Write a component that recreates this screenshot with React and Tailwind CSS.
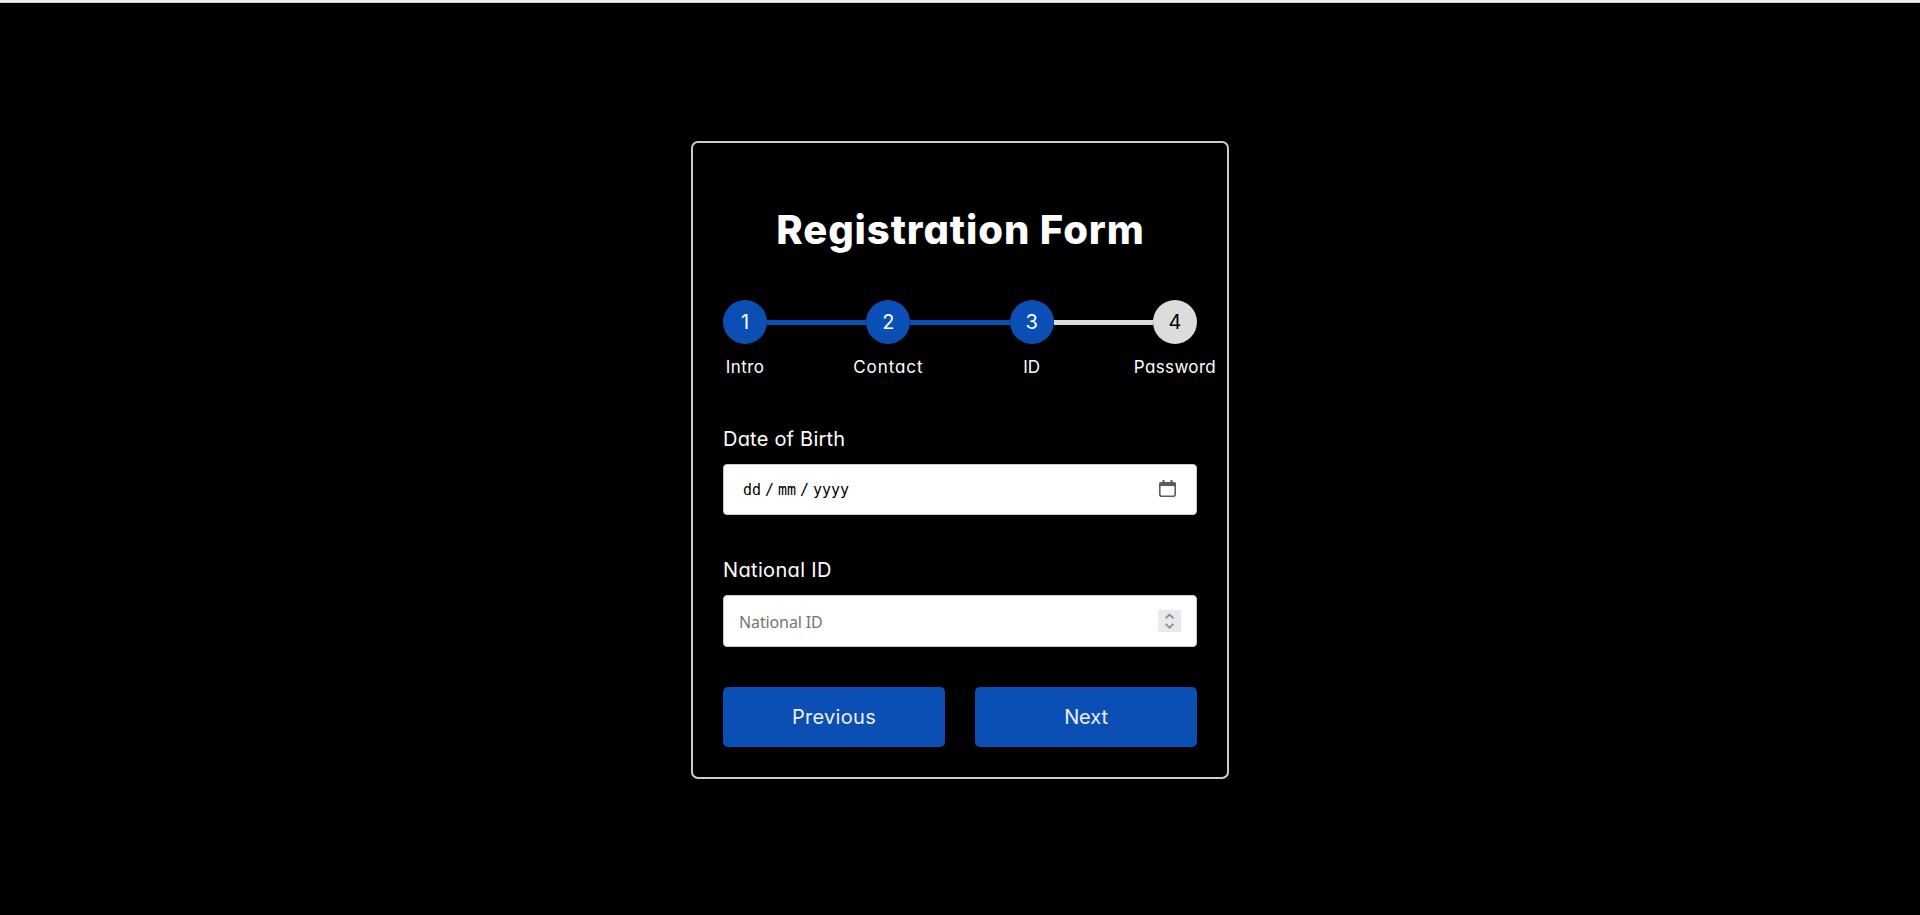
const steps = [
  { n: 1, label: 'Intro', active: true, tracking: 'tracking-[0.45px]' },
  { n: 2, label: 'Contact', active: true, tracking: 'tracking-[0.9px]' },
  { n: 3, label: 'ID', active: true, tracking: 'tracking-[0px]' },
  { n: 4, label: 'Password', active: false, tracking: 'tracking-[0.35px]' },
];

function Stepper() {
  return (
    <ol className="flex h-11 items-center">
      {steps.map((s, i) => (
        <li key={s.n} className={i ? 'flex flex-1 items-center' : 'flex items-center'}>
          {i > 0 && <span className={`mt-px h-[5px] flex-1 ${s.active ? 'bg-[#0b4fb4]' : 'bg-[#dcdcdc]'}`} />}
          <span
            className={`relative flex size-11 items-center justify-center rounded-full text-[20px] leading-none ${
              s.active ? 'bg-[#0b4fb4] text-white' : 'bg-[#dcdcdc] text-black'
            }`}
          >
            {s.n}
            <span className={`absolute top-[58px] left-1/2 -translate-x-1/2 text-[17px] leading-[18px] whitespace-nowrap text-white ${s.tracking}`}>
              {s.label}
            </span>
          </span>
        </li>
      ))}
    </ol>
  );
}

export default function App() {
  return (
    <div className="flex h-[915px] flex-col bg-black font-['Inter',sans-serif] text-white [font-feature-settings:'cv11']">
      <div className="h-[3px] shrink-0 border-b border-[#cccccc] bg-[#f0f0f0]" />
      <main className="flex flex-1 justify-center pt-[138px]">
        <form className="flex h-[638px] w-[538px] flex-col rounded-[7px] border-2 border-[#cccccc] px-[30px]">
          <h1 className="mt-[63px] h-12 pl-px text-center text-[40px] leading-[48px] font-extrabold tracking-[0.9px] whitespace-nowrap">
            Registration Form
          </h1>
          <div className="mt-[46px]">
            <Stepper />
          </div>

          <label className="mt-[83px] h-6 text-[20px] leading-6 tracking-[0.22px]">Date of Birth</label>
          <div className="mt-[13px] flex h-[51px] items-center justify-between rounded-[4px] border border-[#cccccc] bg-white pr-[20px] pl-[19px] text-black">
            <span className="mt-[2px] flex font-['DejaVu_Sans_Mono',monospace] text-[15px] leading-none">
              <span className="w-[22px]">dd</span>
              <span className="w-[13px]">/</span>
              <span className="w-[22px]">mm</span>
              <span className="w-[13px]">/</span>
              <span>yyyy</span>
            </span>
            <svg className="mb-[2px] h-[17px] w-[17px]" viewBox="0 0 17 17" fill="none">
              <path d="M4.5 0v3M12.5 0v3" stroke="#5b5b5b" strokeWidth="2" />
              <rect x="0.8" y="2.8" width="15.4" height="13.4" rx="2" stroke="#5b5b5b" strokeWidth="1.6" />
              <path d="M0 6V4a2 2 0 0 1 2-2h13a2 2 0 0 1 2 2v2z" fill="#5b5b5b" />
            </svg>
          </div>

          <label className="mt-[43px] h-6 text-[20px] leading-6 tracking-[0.35px]">National ID</label>
          <div className="mt-[13px] flex h-[52px] items-center justify-between rounded-[4px] border border-[#cccccc] bg-white pr-[15px] pl-[15px] text-[#757575]">
            <span className="mt-[2px] font-['Noto_Sans',sans-serif] text-[16px] leading-none tracking-[-0.12px]">National ID</span>
            <svg className="h-[22px] w-[23px] bg-[#e9e9ed]" viewBox="0 0 23 22" fill="none" stroke="#8f8f9d" strokeWidth="1.9">
              <path d="M7.6 8.3 11.5 4.6 15.4 8.3M7.6 13.9 11.5 17.6 15.4 13.9" />
            </svg>
          </div>

          <div className="mt-10 flex h-[60px] gap-[30px] text-[20px] text-[#ecf0f6]">
            <button type="button" className="flex-1 rounded-[5px] bg-[#0b4fb4] tracking-[0.3px]">Previous</button>
            <button type="button" className="flex-1 rounded-[5px] bg-[#0b4fb4] tracking-[-0.1px]">Next</button>
          </div>
        </form>
      </main>
    </div>
  );
}
